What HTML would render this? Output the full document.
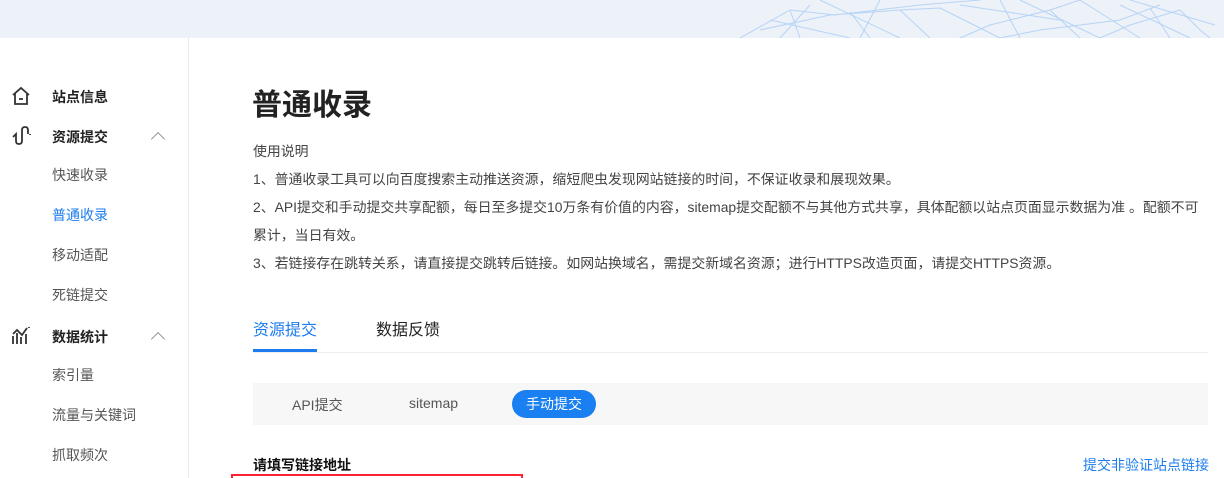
<!DOCTYPE html><html><head><meta charset="utf-8"><style>
*{margin:0;padding:0;box-sizing:border-box}
body{width:1224px;height:478px;overflow:hidden;background:#fff;font-family:"Liberation Sans","Noto Sans CJK SC",sans-serif;position:relative;color:#333}
.hdr{position:absolute;left:0;top:0;width:1224px;height:38px;background:#edf1f8;overflow:hidden}
.side{position:absolute;left:188px;top:38px;width:1px;height:440px;background:#e8e8e8}
.a{position:absolute;white-space:nowrap}
.m{font-size:14px;font-weight:bold;color:#222;left:52px}
.s{font-size:14px;color:#555;left:52px}
.chev{position:absolute;left:153px;width:10px;height:10px;border-left:1.5px solid #999;border-top:1.5px solid #999;transform:rotate(45deg)}
.p{font-size:13.9px;color:#444;left:253px}
</style></head><body>
<div class="hdr"><svg width="1224" height="38" style="position:absolute;left:0;top:0"><g stroke="#a9cdf5" stroke-width="1" fill="none" opacity=".8">
<path d="M740 38 L790 10 L835 15 L920 5 L980 0 M760 30 L830 15 L900 10 L940 8 M960 38 L990 25 L1050 10 L1080 0 M1000 38 L1040 30 L1120 20 L1160 5 M1100 38 L1130 25 L1180 10 L1200 30 L1210 38 M790 10 L800 38 M850 12 L870 38 M900 10 L930 38 M1050 10 L1080 38 M1150 8 L1170 38 M880 0 L860 38 M1000 0 L1020 38 M770 20 L850 38 M810 5 L780 38 M940 8 L1000 38 M1020 0 L1100 38 M1080 0 L1140 38 M1120 5 L1190 38 M820 0 L900 38 M960 5 L1060 20 M1130 0 L1215 25"/></g></svg></div>
<div class="side"></div>
<svg class="a" style="left:11px;top:86px" width="20" height="20" viewBox="0 0 20 20" fill="none" stroke="#333" stroke-width="1.8"><path d="M2 9 L10 2 L18 9 M4 7 V18 H16 V7 M8 13 h4"/></svg>
<div class="a m" style="top:87px">站点信息</div>
<svg class="a" style="left:11px;top:125px" width="20" height="20" viewBox="0 0 20 20" fill="none" stroke="#333" stroke-width="1.8"><path d="M2 12 L5 9 L5 16 Q5 19 8 19 Q11 19 11 16 V5 Q11 2 14 2 Q17 2 17 5 V9 M19 9 v1"/></svg>
<div class="a m" style="top:127px">资源提交</div><div class="chev" style="top:134px"></div>
<div class="a s" style="top:165px">快速收录</div>
<div class="a s" style="top:205px;color:#1d7df0">普通收录</div>
<div class="a s" style="top:245px">移动适配</div>
<div class="a s" style="top:285px">死链提交</div>
<svg class="a" style="left:11px;top:325px" width="20" height="20" viewBox="0 0 20 20" fill="none" stroke="#333" stroke-width="1.8"><path d="M2 19 V11 M6 19 V8 M10 19 V12 M15 19 V9 M2 9 L6 5 L11 10 L16 3 M18 2 v1"/></svg>
<div class="a m" style="top:327px">数据统计</div><div class="chev" style="top:334px"></div>
<div class="a s" style="top:365px">索引量</div>
<div class="a s" style="top:405px">流量与关键词</div>
<div class="a s" style="top:445px">抓取频次</div>
<div class="a" style="left:252px;top:80px;font-size:30px;font-weight:bold;color:#222">普通收录</div>
<div class="a p" style="top:141px">使用说明</div>
<div class="a p" style="top:169px">1、普通收录工具可以向百度搜索主动推送资源，缩短爬虫发现网站链接的时间，不保证收录和展现效果。</div>
<div class="a p" style="top:197px">2、API提交和手动提交共享配额，每日至多提交10万条有价值的内容，sitemap提交配额不与其他方式共享，具体配额以站点页面显示数据为准 。配额不可</div>
<div class="a p" style="top:225px">累计，当日有效。</div>
<div class="a p" style="top:253px">3、若链接存在跳转关系，请直接提交跳转后链接。如网站换域名，需提交新域名资源；进行HTTPS改造页面，请提交HTTPS资源。</div>
<div class="a" style="left:253px;top:316px;font-size:16px;color:#1d7df0">资源提交</div>
<div class="a" style="left:376px;top:316px;font-size:16px;color:#222">数据反馈</div>
<div class="a" style="left:253px;top:352px;width:955px;height:1px;background:#eee"></div>
<div class="a" style="left:253px;top:349px;width:64px;height:3px;background:#1d7df0"></div>
<div class="a" style="left:253px;top:383px;width:955px;height:42px;background:#f7f7f7"></div>
<div class="a" style="left:292px;top:395px;font-size:14px;color:#555">API提交</div>
<div class="a" style="left:409px;top:395px;font-size:14px;color:#555">sitemap</div>
<div class="a" style="left:512px;top:390px;width:84px;height:28px;border-radius:14px;background:#1a7ff0;color:#fff;font-size:14px;text-align:center;line-height:28px">手动提交</div>
<div class="a" style="left:253px;top:455px;font-size:14px;font-weight:bold;color:#111">请填写链接地址</div>
<div class="a" style="left:1083px;top:455px;font-size:14px;color:#1d7df0">提交非验证站点链接</div>
<div class="a" style="left:231px;top:474px;width:292px;height:4px;border:2px solid #f23;border-bottom:none"></div>
</body></html>
